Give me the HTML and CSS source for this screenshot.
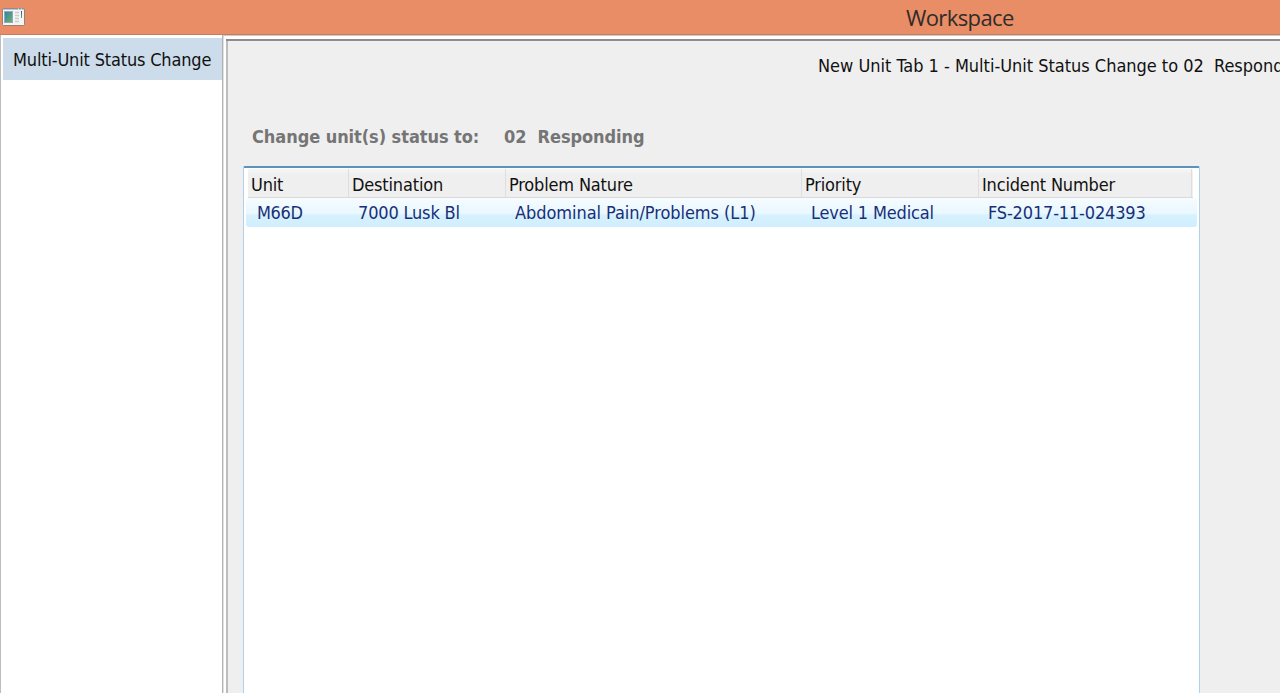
FILE: index.html
```html
<!DOCTYPE html>
<html lang="en">
<head>
<meta charset="utf-8">
<title>Workspace</title>
<link rel="stylesheet" href="styles.css">
</head>
<body>
<header class="titlebar">
  <svg class="app-icon" width="26" height="20" viewBox="0 0 26 20">
    <rect x="2.5" y="1.5" width="22" height="17" rx="1" fill="#f4f5f4" stroke="#9b806f"/>
    <path d="M3 2h21" stroke="#8799a5"/>
    <path d="M18 2h1M21 2h1" stroke="#f5f5f5"/>
    <rect x="4.5" y="4.5" width="8" height="11" fill="url(#pane)" stroke="#94a7c1"/>
    <path d="M15 5.5h4M15 8.5h4M15 11.5h4M15 14.5h4" stroke="#cbcbcb" stroke-width="1.5"/>
    <rect x="21" y="4" width="1" height="7" fill="url(#bar)"/>
    <defs>
      <linearGradient id="pane" x1="0" y1="0" x2="1" y2="1"><stop stop-color="#397bb0"/><stop offset="1" stop-color="#65ba68"/></linearGradient>
      <linearGradient id="bar" x1="0" y1="0" x2="0" y2="1"><stop stop-color="#26599c"/><stop offset="1" stop-color="#5cae72"/></linearGradient>
    </defs>
  </svg>
  <h1 class="window-title">Workspace</h1>
</header>
<div class="workspace">
  <nav class="sidebar"><div class="nav-item">Multi-Unit Status Change</div></nav>
  <main class="content">
    <div class="tab-title">New Unit Tab 1 - Multi-Unit Status Change to 02&nbsp; Respond</div>
    <div class="status"><span class="status-label">Change unit(s) status to:</span><span class="status-value">02&nbsp; Responding</span></div>
    <section class="list">
      <div class="row head">
        <div class="cell">Unit</div><div class="cell">Destination</div><div class="cell">Problem Nature</div><div class="cell">Priority</div><div class="cell">Incident Number</div>
      </div>
      <div class="row selected">
        <div class="cell unit">M66D</div><div class="cell">7000 Lusk Bl</div><div class="cell problem">Abdominal Pain/Problems (L1)</div><div class="cell">Level 1 Medical</div><div class="cell">FS-2017-11-024393</div>
      </div>
    </section>
  </main>
</div>
</body>
</html>
```
FILE: styles.css
```css
* { box-sizing: border-box; }
body { margin: 0; width: 1280px; height: 693px; overflow: hidden; display: flex; flex-direction: column; background: #efefef; color: #111; font: 18px/24px "DejaVu Sans Condensed", "DejaVu Sans", sans-serif; font-stretch: condensed; white-space: nowrap; letter-spacing: -0.17px; }
.titlebar { height: 35px; flex: none; display: flex; background: #e98d67; border-bottom: 1px solid #c97c5d; }
.app-icon { margin-top: 7px; flex: none; }
.window-title { margin: 3px 0 0 880px; font: 400 22px/28px "Open Sans", sans-serif; letter-spacing: -0.6px; color: #302b29; }
.workspace { flex: 1; display: flex; min-height: 0; }
.sidebar { width: 222px; flex: none; background: #fff; border-left: 1px solid #bdbdbd; padding: 3px 0 0 2px; }
.nav-item { height: 42px; background: #cddcea; padding: 10px 0 0 10px; }
.content { flex: 1; min-width: 0; overflow: hidden; border-left: 1px solid #b2b2b2; border-top: 1px solid #cbcbcb; background: #efefef; box-shadow: inset 1px 0 #e0e0e0, inset 0 3px #fff, inset 3px 0 #fff, inset 0 5px #8c8c8c, inset 5px 0 #bcbcbc; padding-left: 20px; }
.tab-title { padding: 18px 0 0 575px; height: 85px; letter-spacing: -0.02px; }
.status { display: flex; height: 45px; padding: 4px 0 0 9px; color: #757575; font-weight: 700; letter-spacing: -0.06px; }
.status-label { width: 252px; }
.list { width: 957px; height: 550px; background: #fff; border: 1px solid #afd2ec; border-top: 2px solid #5d92bd; border-radius: 2px 2px 0 0; padding: 1px 2px 0 2px; }
.row { display: grid; grid-template-columns: 101px 157px 296px 177px 213px; }
.head { height: 29px; margin: 0 4px 0 2px; background: linear-gradient(#f6f6f6, #efefef 20%); border-bottom: 1px solid #d9d9d9; }
.head .cell { padding: 4px 0 0 3px; border-right: 1px solid #dedede; }
.selected { height: 29px; padding-left: 2px; border-radius: 3px; background: linear-gradient(#f6fcff, #e8f7ff 55%, #d8f1fe 58%, #cfeefd); color: #172f78; }
.selected .cell { padding: 3px 0 0 9px; }
.selected .unit { letter-spacing: -0.4px; }
.selected .problem { letter-spacing: -0.06px; }
```
